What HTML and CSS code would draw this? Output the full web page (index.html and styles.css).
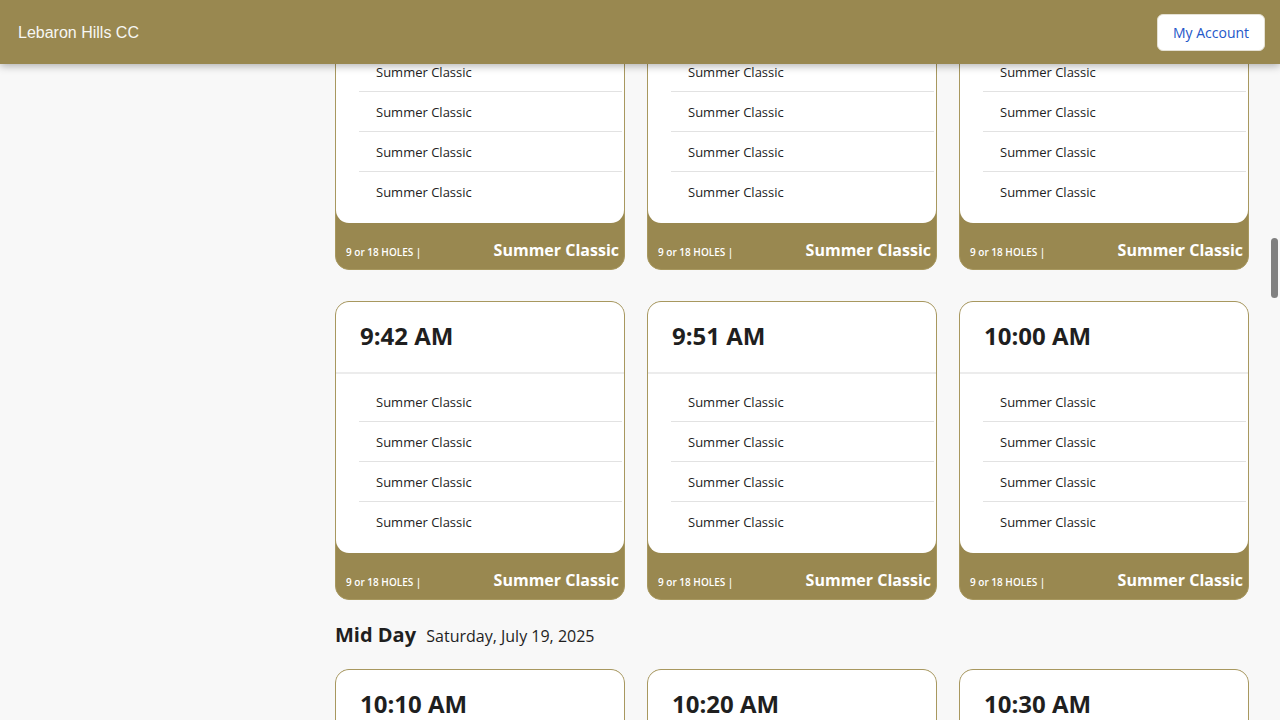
FILE: index.html
```html
<!DOCTYPE html>
<html lang="en">
<head>
<meta charset="utf-8">
<title>Lebaron Hills CC</title>
<link rel="stylesheet" href="styles.css">
</head>
<body>
<header class="topbar">
  <div class="brand">Lebaron Hills CC</div>
  <button class="account-btn">My Account</button>
</header>
<main class="content">
  <div class="card-grid first-row">
    <div class="card">
      <div class="card-body">
        <div class="card-head"><span class="time">9:24 AM</span></div>
        <ul class="players">
          <li>Summer Classic</li><li>Summer Classic</li><li>Summer Classic</li><li>Summer Classic</li>
        </ul>
      </div>
      <div class="card-foot"><span class="holes">9 or 18 HOLES |</span><span class="event">Summer Classic</span></div>
    </div>
    <div class="card">
      <div class="card-body">
        <div class="card-head"><span class="time">9:33 AM</span></div>
        <ul class="players">
          <li>Summer Classic</li><li>Summer Classic</li><li>Summer Classic</li><li>Summer Classic</li>
        </ul>
      </div>
      <div class="card-foot"><span class="holes">9 or 18 HOLES |</span><span class="event">Summer Classic</span></div>
    </div>
    <div class="card">
      <div class="card-body">
        <div class="card-head"><span class="time">9:40 AM</span></div>
        <ul class="players">
          <li>Summer Classic</li><li>Summer Classic</li><li>Summer Classic</li><li>Summer Classic</li>
        </ul>
      </div>
      <div class="card-foot"><span class="holes">9 or 18 HOLES |</span><span class="event">Summer Classic</span></div>
    </div>
  </div>

  <div class="card-grid">
    <div class="card">
      <div class="card-body">
        <div class="card-head"><span class="time">9:42 AM</span></div>
        <ul class="players">
          <li>Summer Classic</li><li>Summer Classic</li><li>Summer Classic</li><li>Summer Classic</li>
        </ul>
      </div>
      <div class="card-foot"><span class="holes">9 or 18 HOLES |</span><span class="event">Summer Classic</span></div>
    </div>
    <div class="card">
      <div class="card-body">
        <div class="card-head"><span class="time">9:51 AM</span></div>
        <ul class="players">
          <li>Summer Classic</li><li>Summer Classic</li><li>Summer Classic</li><li>Summer Classic</li>
        </ul>
      </div>
      <div class="card-foot"><span class="holes">9 or 18 HOLES |</span><span class="event">Summer Classic</span></div>
    </div>
    <div class="card">
      <div class="card-body">
        <div class="card-head"><span class="time">10:00 AM</span></div>
        <ul class="players">
          <li>Summer Classic</li><li>Summer Classic</li><li>Summer Classic</li><li>Summer Classic</li>
        </ul>
      </div>
      <div class="card-foot"><span class="holes">9 or 18 HOLES |</span><span class="event">Summer Classic</span></div>
    </div>
  </div>

  <h2 class="section-title">Mid Day <span class="section-date">Saturday, July 19, 2025</span></h2>

  <div class="card-grid">
    <div class="card">
      <div class="card-body">
        <div class="card-head"><span class="time">10:10 AM</span></div>
        <ul class="players">
          <li>Summer Classic</li><li>Summer Classic</li><li>Summer Classic</li><li>Summer Classic</li>
        </ul>
      </div>
      <div class="card-foot"><span class="holes">9 or 18 HOLES |</span><span class="event">Summer Classic</span></div>
    </div>
    <div class="card">
      <div class="card-body">
        <div class="card-head"><span class="time">10:20 AM</span></div>
        <ul class="players">
          <li>Summer Classic</li><li>Summer Classic</li><li>Summer Classic</li><li>Summer Classic</li>
        </ul>
      </div>
      <div class="card-foot"><span class="holes">9 or 18 HOLES |</span><span class="event">Summer Classic</span></div>
    </div>
    <div class="card">
      <div class="card-body">
        <div class="card-head"><span class="time">10:30 AM</span></div>
        <ul class="players">
          <li>Summer Classic</li><li>Summer Classic</li><li>Summer Classic</li><li>Summer Classic</li>
        </ul>
      </div>
      <div class="card-foot"><span class="holes">9 or 18 HOLES |</span><span class="event">Summer Classic</span></div>
    </div>
  </div>
</main>
<div class="scroll-thumb"></div>
</body>
</html>
```

FILE: styles.css
```css
* { box-sizing: border-box; }
html, body {
  margin: 0;
  padding: 0;
  height: 720px;
  overflow: hidden;
}
body {
  background: #f8f8f8;
  font-family: "Open Sans", "Noto Sans", sans-serif;
  color: #1f1f1f;
}
.topbar {
  position: relative;
  z-index: 5;
  height: 64px;
  background: #998850;
  display: flex;
  align-items: center;
  justify-content: space-between;
  padding: 0 15px 0 18px;
  box-shadow: 0 2px 8px rgba(0, 0, 0, 0.3);
}
.brand {
  font-family: "Liberation Sans", Arial, sans-serif;
  font-size: 16px;
  color: #f7f7f4;
  margin-top: 1px;
}
.account-btn {
  width: 108px;
  height: 37px;
  margin-top: 1px;
  background: #ffffff;
  border: 1px solid #e5e1d4;
  border-radius: 6px;
  font-family: "Open Sans", sans-serif;
  font-size: 14px;
  color: #2457c9;
  padding: 0;
  line-height: 1;
}
.content {
  padding-left: 335px;
  width: 1249px;
}
.card-grid {
  display: grid;
  grid-template-columns: repeat(3, 290px);
  column-gap: 22px;
  margin-bottom: 31px;
}
.first-row {
  margin-top: -93px;
}
.card {
  height: 299px;
  border: 1px solid #a8985f;
  border-radius: 14px;
  background: #998850;
  overflow: hidden;
  display: flex;
  flex-direction: column;
}
.card-body {
  background: #ffffff;
  border-radius: 0 0 13px 13px;
  flex: 0 0 251px;
}
.card-head {
  height: 72px;
  border-bottom: 2px solid #ececec;
  padding: 0 24px;
  display: flex;
  align-items: center;
}
.time {
  font-size: 24px;
  font-weight: 700;
  color: #1f1f1f;
  margin-top: -4px;
}
.players {
  list-style: none;
  margin: 0 2px 0 23px;
  padding: 8px 0 0 0;
}
.players li {
  height: 40px;
  line-height: 40px;
  padding-left: 17px;
  font-size: 13px;
  color: #222;
  border-bottom: 1px solid #e2e2e2;
}
.players li:last-child {
  border-bottom: none;
}
.card-foot {
  flex: 1;
  display: flex;
  align-items: baseline;
  justify-content: space-between;
  padding: 16px 5px 0 10px;
  color: #ffffff;
}
.holes {
  font-size: 10px;
  font-weight: 600;
}
.event {
  font-size: 16px;
  font-weight: 700;
}
.section-title {
  margin: -10px 0 19px 0;
  font-size: 20px;
  font-weight: 700;
  color: #1f1f1f;
  line-height: 28px;
}
.section-date {
  font-size: 16px;
  font-weight: 400;
  margin-left: 5px;
}
.scroll-thumb {
  position: fixed;
  right: 2px;
  top: 238px;
  width: 7px;
  height: 60px;
  border-radius: 4px;
  background: #808080;
}
```
